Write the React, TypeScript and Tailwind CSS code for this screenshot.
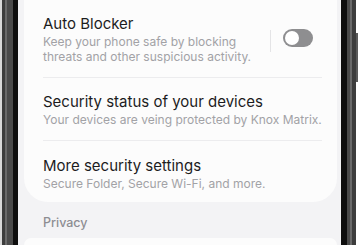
import type { ReactNode } from 'react';

const FONT = { fontFamily: 'Inter, Roboto, "Noto Sans", sans-serif' };

function Row({
  title,
  children,
  className = '',
  aside,
}: {
  title: string;
  children: ReactNode;
  className?: string;
  aside?: ReactNode;
}) {
  return (
    <div className={`flex items-start ${className}`}>
      <div className="min-w-0 flex-1">
        <p className="text-[15px] leading-[18px] text-[#1c1c1e]">{title}</p>
        <p className="mt-[1px] text-[12px] leading-[15px] text-[#a2a2a6]">{children}</p>
      </div>
      {aside}
    </div>
  );
}

function Toggle() {
  return (
    <div className="flex items-start pr-[24px]">
      <div className="mr-[12px] mt-[15px] h-[22px] w-px bg-[#e4e4e6]" />
      <div className="mt-[14px] flex h-[18px] w-[30px] items-center rounded-full bg-[#8e8e90] px-[2px]">
        <div className="h-[14px] w-[14px] rounded-full bg-white" />
      </div>
    </div>
  );
}

export default function App() {
  return (
    <div className="flex h-[245px] w-[360px] overflow-hidden bg-white" style={FONT}>
      {/* left bezel */}
      <div className="flex h-full shrink-0">
        <div className="w-[2px] bg-[#d9d9d9]" />
        <div className="w-[3px] bg-[#3d3d3d]" />
        <div className="w-[2px] bg-[#6a6a6a]" />
        <div className="w-[6px] bg-[#4a4a4a]" />
        <div className="w-[5px] bg-[#0e0e0e]" />
      </div>

      {/* screen */}
      <div className="flex h-full w-[323px] shrink-0 flex-col bg-[#f3f3f5]">
        <div className="ml-[6px] mr-[4px] rounded-b-[24px] bg-[#fcfcfc] pb-[11px] pl-[19px]">
          <Row title="Auto Blocker" className="pt-[15px] pb-[13px]" aside={<Toggle />}>
            Keep your phone safe by blocking
            <br />
            threats and other suspicious activity.
          </Row>
          <div className="mr-[15px] h-px bg-[#ececee]" />
          <Row title="Security status of your devices" className="pt-[15px] pb-[13px] pr-[8px]">
            Your devices are veing protected by Knox Matrix.
          </Row>
          <div className="mr-[15px] h-px bg-[#ececee]" />
          <Row title="More security settings" className="pt-[16px] pr-[8px]">
            Secure Folder, Secure Wi-Fi, and more.
          </Row>
        </div>
        <p className="pl-[25px] pt-[13px] text-[12.5px] font-medium leading-[16px] text-[#8d8d92]">
          Privacy
        </p>
        <div className="ml-[6px] mr-[4px] mt-[7px] h-[40px] rounded-t-[20px] bg-[#fcfcfc]" />
      </div>

      {/* right bezel */}
      <div className="flex h-full shrink-0">
        <div className="w-[6px] bg-[#0e0e0e]" />
        <div className="w-[3px] bg-[#4a4a4a]" />
        <div className="w-[2px] bg-[#6a6a6a]" />
        <div className="w-[4px] bg-[#3d3d3d]" />
        <div className="flex w-[4px] flex-col bg-white">
          <div className="h-[33px]" />
          <div className="h-[49px] w-[2px] bg-[#5a5a5a]" />
        </div>
      </div>
    </div>
  );
}
